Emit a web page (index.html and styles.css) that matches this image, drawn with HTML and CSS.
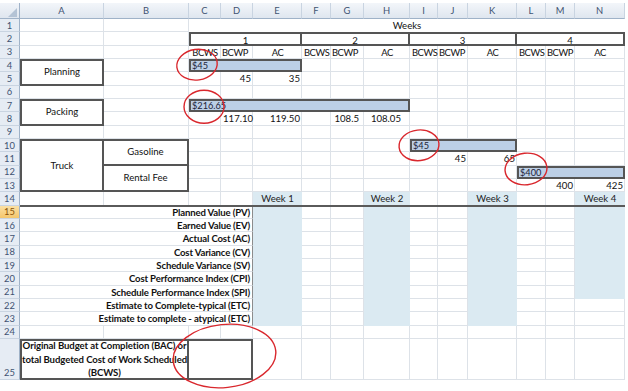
FILE: index.html
```html
<!DOCTYPE html>
<html>
<head>
<meta charset="utf-8">
<link rel="stylesheet" href="styles.css">
</head>
<body>
<div class="page">
  <div class="sheet">
    <div class="corner"><svg width="20" height="16" viewBox="0 0 20 16"><polygon points="17,5 17,14 8,14" fill="#b4c3d5"/></svg></div>
    <div class="ch cA">A</div>
    <div class="ch cB">B</div>
    <div class="ch cC">C</div>
    <div class="ch cD">D</div>
    <div class="ch cE">E</div>
    <div class="ch cF">F</div>
    <div class="ch cG">G</div>
    <div class="ch cH">H</div>
    <div class="ch cI">I</div>
    <div class="ch cJ">J</div>
    <div class="ch cK">K</div>
    <div class="ch cL">L</div>
    <div class="ch cM">M</div>
    <div class="ch cN">N</div>

    <div class="rh r1">1</div>
    <div class="rh r2">2</div>
    <div class="rh r3">3</div>
    <div class="rh r4">4</div>
    <div class="rh r5">5</div>
    <div class="rh r6">6</div>
    <div class="rh r7">7</div>
    <div class="rh r8">8</div>
    <div class="rh r9">9</div>
    <div class="rh r10">10</div>
    <div class="rh r11">11</div>
    <div class="rh r12">12</div>
    <div class="rh r13">13</div>
    <div class="rh r14">14</div>
    <div class="rh r15 sel">15</div>
    <div class="rh r16">16</div>
    <div class="rh r17">17</div>
    <div class="rh r18">18</div>
    <div class="rh r19">19</div>
    <div class="rh r20">20</div>
    <div class="rh r21">21</div>
    <div class="rh r22">22</div>
    <div class="rh r23">23</div>
    <div class="rh r24">24</div>
    <div class="rh r25 bottom">25</div>

    <div class="vl cA"></div>
    <div class="vl cB"></div>
    <div class="vl cC"></div>
    <div class="vl cD"></div>
    <div class="vl cE"></div>
    <div class="vl cF"></div>
    <div class="vl cG"></div>
    <div class="vl cH"></div>
    <div class="vl cI"></div>
    <div class="vl cJ"></div>
    <div class="vl cK"></div>
    <div class="vl cL"></div>
    <div class="vl cM"></div>
    <div class="vl cN"></div>

    <div class="hl r1"></div>
    <div class="hl r2"></div>
    <div class="hl r3"></div>
    <div class="hl r4"></div>
    <div class="hl r5"></div>
    <div class="hl r6"></div>
    <div class="hl r7"></div>
    <div class="hl r8"></div>
    <div class="hl r9"></div>
    <div class="hl r10"></div>
    <div class="hl r11"></div>
    <div class="hl r12"></div>
    <div class="hl r13"></div>
    <div class="hl r14"></div>
    <div class="hl r15"></div>
    <div class="hl r16"></div>
    <div class="hl r17"></div>
    <div class="hl r18"></div>
    <div class="hl r19"></div>
    <div class="hl r20"></div>
    <div class="hl r21"></div>
    <div class="hl r22"></div>
    <div class="hl r23"></div>
    <div class="hl r24"></div>
    <div class="hl r25"></div>

    <div class="cell white ctr cC r1 w12">Weeks</div>

    <div class="cell box ctr cC r2 w3">1</div>
    <div class="cell box nl ctr cF r2 w3">2</div>
    <div class="cell box nl ctr cI r2 w3">3</div>
    <div class="cell box nl ctr cL r2 w3">4</div>

    <div class="cell code ctr cC r3">BCWS</div>
    <div class="cell code lft cD r3">BCWP</div>
    <div class="cell code ctr cE r3">AC</div>
    <div class="cell code ctr cF r3">BCWS</div>
    <div class="cell code lft cG r3">BCWP</div>
    <div class="cell code ctr cH r3">AC</div>
    <div class="cell code ctr cI r3">BCWS</div>
    <div class="cell code lft cJ r3">BCWP</div>
    <div class="cell code ctr cK r3">AC</div>
    <div class="cell code ctr cL r3">BCWS</div>
    <div class="cell code lft cM r3">BCWP</div>
    <div class="cell code ctr cN r3">AC</div>

    <div class="cell box mid cA r4 h2">Planning</div>
    <div class="cell bar cC r4 w3">$45</div>
    <div class="cell num cD r5">45</div>
    <div class="cell num cE r5">35</div>

    <div class="cell box mid cA r7 h2">Packing</div>
    <div class="cell bar cC r7 w6">$216.65</div>
    <div class="cell num cD r8">117.10</div>
    <div class="cell num cE r8">119.50</div>
    <div class="cell num pad5 cG r8">108.5</div>
    <div class="cell num pad8 cH r8">108.05</div>

    <div class="cell box mid cA r10 h4">Truck</div>
    <div class="cell box nl mid cB r10 h2">Gasoline</div>
    <div class="cell box nl nt mid cB r12 h2">Rental Fee</div>
    <div class="cell bar cI r10 w3">$45</div>
    <div class="cell num cJ r11">45</div>
    <div class="cell num cK r11">65</div>
    <div class="cell bar cL r12 w3">$400</div>
    <div class="cell num cM r13">400</div>
    <div class="cell num cN r13">425</div>

    <div class="cell fill ctr cE r14">Week 1</div>
    <div class="cell fill ctr cH r14">Week 2</div>
    <div class="cell fill ctr cK r14">Week 3</div>
    <div class="cell fill ctr cN r14">Week 4</div>

    <div class="fill cE r15 h9"></div>
    <div class="fill cH r15 h9"></div>
    <div class="fill cK r15 h9"></div>
    <div class="fill cN r15 h7"></div>

    <div class="cell label cA r15 w4">Planned Value (PV)</div>
    <div class="cell label cA r16 w4">Earned Value (EV)</div>
    <div class="cell label cA r17 w4">Actual Cost (AC)</div>
    <div class="cell label cA r18 w4">Cost Variance (CV)</div>
    <div class="cell label cA r19 w4">Schedule Variance (SV)</div>
    <div class="cell label cA r20 w4">Cost Performance Index (CPI)</div>
    <div class="cell label cA r21 w4">Schedule Performance Index (SPI)</div>
    <div class="cell label cA r22 w4">Estimate to Complete-typical (ETC)</div>
    <div class="cell label cA r23 w4">Estimate to complete - atypical (ETC)</div>

    <div class="sep cA r15 w14"></div>

    <div class="cell box mid bac cA r25 w2">Original Budget at Completion (BAC) or<br>total Budgeted Cost of Work Scheduled<br>(BCWS)</div>
    <div class="cell box nl cC r25 w2"></div>
  </div>

  <svg class="marks" width="628" height="391" viewBox="0 0 628 391">
    <ellipse cx="197" cy="64.7" rx="20.3" ry="15.3" transform="rotate(-8 197 64.7)"/>
    <ellipse cx="204" cy="106.7" rx="20" ry="16.5"/>
    <ellipse cx="419" cy="145.3" rx="20" ry="15.3" transform="rotate(-6 419 145.3)"/>
    <ellipse cx="526" cy="169" rx="21" ry="15.8" transform="rotate(-6 526 169)"/>
    <ellipse cx="224.5" cy="356" rx="51.5" ry="31.5" transform="rotate(-6 224.5 356)"/>
  </svg>
</div>
</body>
</html>
```

FILE: styles.css
```css
* { box-sizing: border-box; margin: 0; padding: 0; }
html, body { background: #ffffff; }
body {
  font-family: Lato, "Liberation Sans", sans-serif;
  font-size: 9.6px;
  color: #111111;
}
.page {
  position: relative;
  width: 628px;
  height: 391px;
  overflow: hidden;
  padding-top: 3px;
}
.sheet {
  display: grid;
  grid-template-columns: 20px 84px 85px 32px 32px 49px 29px 33px 46px 28px 30px 49px 29px 29px 50px 3px;
  grid-template-rows: 16px repeat(24, 13.333px) 41px 11px;
}

/* column placement */
.cA { grid-column-start: 2; }
.cB { grid-column-start: 3; }
.cC { grid-column-start: 4; }
.cD { grid-column-start: 5; }
.cE { grid-column-start: 6; }
.cF { grid-column-start: 7; }
.cG { grid-column-start: 8; }
.cH { grid-column-start: 9; }
.cI { grid-column-start: 10; }
.cJ { grid-column-start: 11; }
.cK { grid-column-start: 12; }
.cL { grid-column-start: 13; }
.cM { grid-column-start: 14; }
.cN { grid-column-start: 15; }

/* row placement */
.r1 { grid-row-start: 2; }
.r2 { grid-row-start: 3; }
.r3 { grid-row-start: 4; }
.r4 { grid-row-start: 5; }
.r5 { grid-row-start: 6; }
.r6 { grid-row-start: 7; }
.r7 { grid-row-start: 8; }
.r8 { grid-row-start: 9; }
.r9 { grid-row-start: 10; }
.r10 { grid-row-start: 11; }
.r11 { grid-row-start: 12; }
.r12 { grid-row-start: 13; }
.r13 { grid-row-start: 14; }
.r14 { grid-row-start: 15; }
.r15 { grid-row-start: 16; }
.r16 { grid-row-start: 17; }
.r17 { grid-row-start: 18; }
.r18 { grid-row-start: 19; }
.r19 { grid-row-start: 20; }
.r20 { grid-row-start: 21; }
.r21 { grid-row-start: 22; }
.r22 { grid-row-start: 23; }
.r23 { grid-row-start: 24; }
.r24 { grid-row-start: 25; }
.r25 { grid-row-start: 26; }

/* spans */
.w2 { grid-column-end: span 2; }
.w3 { grid-column-end: span 3; }
.w4 { grid-column-end: span 4; }
.w6 { grid-column-end: span 6; }
.w12 { grid-column-end: span 12; }
.w14 { grid-column-end: span 14; }
.h2 { grid-row-end: span 2; }
.h4 { grid-row-end: span 4; }
.h7 { grid-row-end: span 7; }
.h9 { grid-row-end: span 9; }

/* headers */
.corner {
  grid-column: 1;
  grid-row: 1;
  background: linear-gradient(#f1f4f9, #dfe6ef);
  border-right: 1px solid #9fb2c8;
  border-bottom: 1px solid #9fb2c8;
}
.corner svg { display: block; }
.ch {
  grid-row: 1;
  background: linear-gradient(#f3f6fa, #dfe6ef);
  border-right: 1px solid #c9d4e1;
  border-bottom: 1px solid #9fb2c8;
  color: #3f5372;
  text-align: center;
  line-height: 15px;
  font-size: 9.4px;
}
.rh {
  grid-column: 1;
  background: #e6ecf4;
  border-right: 1px solid #9fb2c8;
  border-bottom: 1px solid #c9d4e1;
  color: #3f5372;
  font-size: 9.4px;
  display: flex;
  align-items: center;
  justify-content: center;
}
.rh.sel {
  background: linear-gradient(#fbe0a4, #f4c66c);
  color: #8a5208;
}
.rh.bottom { align-items: flex-end; padding-bottom: 1px; }

/* gridlines */
.vl {
  grid-row: 2 / 27;
  border-right: 1px solid #dde2e8;
}
.hl {
  grid-column: 2 / 16;
  border-bottom: 1px solid #dde2e8;
}

/* cells */
.cell {
  padding: 0 2px;
  line-height: 13px;
  white-space: nowrap;
  overflow: visible;
}
.ctr { text-align: center; }
.lft { text-align: left; padding-left: 1px; }
.code { letter-spacing: -0.45px; font-size: 9.4px; }
.num { text-align: right; padding-right: 2px; }
.pad5 { padding-right: 5px; }
.pad8 { padding-right: 9px; }
.white { background: #ffffff; }
.box {
  background: #ffffff;
  border: 2px solid #555555;
}
.nl { border-left: 0; }
.nt { border-top: 0; }
.mid {
  display: flex;
  align-items: center;
  justify-content: center;
  line-height: 12px;
}
.bar {
  background: #bccfe6;
  border: 2px solid #555555;
  line-height: 10px;
  padding-left: 1px;
  color: #1b2238;
  font-size: 9.2px;
}
.fill { background: #dbeaf2; }
.cell.fill { color: #222222; }
.label {
  background: #ffffff;
  border-bottom: 1px solid #dde2e8;
  border-right: 1px solid #8c8c8c;
  text-align: right;
  font-weight: 700;
  letter-spacing: -0.15px;
}
.sep {
  border-top: 2px solid #5a5a5a;
  height: 2px;
  align-self: start;
  margin-top: -1px;
}
.bac {
  font-weight: 700;
  line-height: 13.5px;
  text-align: center;
  flex-direction: column;
  white-space: nowrap;
  letter-spacing: -0.1px;
}

/* red annotation circles */
.marks {
  position: absolute;
  left: 0;
  top: 0;
  pointer-events: none;
}
.marks ellipse {
  fill: none;
  stroke: #d9272d;
  stroke-width: 1.4;
}
```
